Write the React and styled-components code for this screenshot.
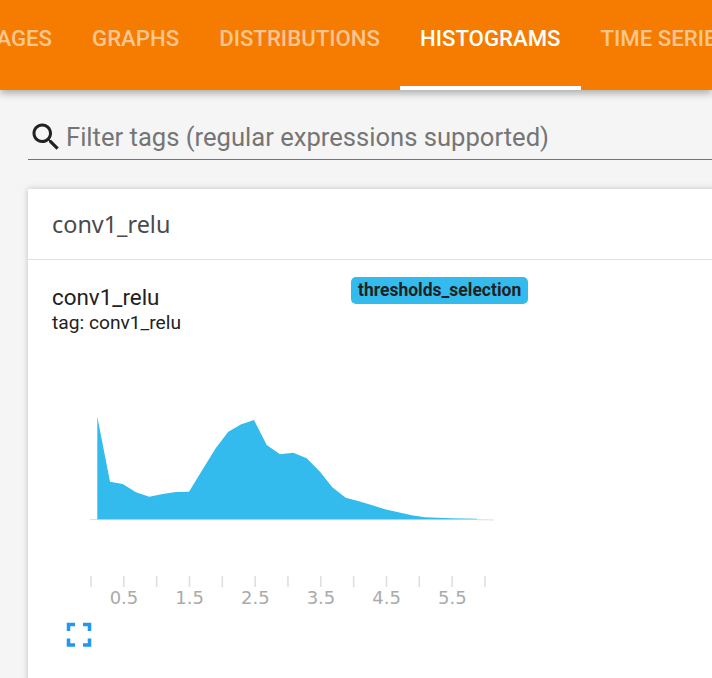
import styled, { createGlobalStyle } from 'styled-components'

const GlobalStyle = createGlobalStyle`
  html, body {
    margin: 0;
    width: 712px;
    height: 678px;
    overflow: hidden;
    background: #f5f5f5;
    font-family: Roboto, "Liberation Sans", sans-serif;
  }
`

const Page = styled.div`
  width: 712px;
  height: 678px;
  overflow: hidden;
  background: #f5f5f5;
`

const Header = styled.header`
  position: relative;
  z-index: 1;
  height: 90px;
  background: #f57c00;
  box-shadow: 0 3px 8px rgba(0, 0, 0, 0.32);
`

const Tabs = styled.nav`
  display: flex;
  margin-left: -49.5px;
  white-space: nowrap;
`

const Tab = styled.div`
  box-sizing: border-box;
  height: 90px;
  padding: 25px 20px 0;
  font-size: 22.2px;
  line-height: 26px;
  font-weight: 500;
  color: ${({ $active }) => ($active ? '#fff' : 'rgba(255, 255, 255, 0.58)')};
  border-bottom: 4px solid ${({ $active }) => ($active ? '#fff' : 'transparent')};
`

const Content = styled.main`
  padding: 30px 0 0 28px;
`

const Search = styled.div`
  display: flex;
  align-items: center;
  gap: 2px;
  height: 34px;
  padding-bottom: 5px;
  border-bottom: 1px solid #757575;
  margin-bottom: 29px;
`

const SearchIcon = styled.svg`
  width: 36px;
  height: 36px;
  flex-shrink: 0;
  fill: #212121;
`

const Placeholder = styled.span`
  font-size: 25.6px;
  line-height: 30px;
  color: #757575;
`

const Card = styled.section`
  width: 760px;
  height: 520px;
  background: #fff;
  box-shadow: 0 0 6px rgba(0, 0, 0, 0.22);
`

const CardTitle = styled.h2`
  box-sizing: border-box;
  height: 71px;
  margin: 0;
  padding: 20px 24px 0;
  border-bottom: 1px solid #e0e0e0;
  font-family: "Noto Sans", Roboto, sans-serif;
  font-size: 23.4px;
  line-height: 30px;
  font-weight: 400;
  color: #4a4a4a;
`

const CardBody = styled.div`
  padding: 17px 24px 0;
`

const ChartHead = styled.div`
  display: flex;
  align-items: flex-start;
  margin-bottom: 3px;
`

const ChartNames = styled.div`
  width: 299px;
  color: #212121;
  padding-top: 7px;
`

const ChartName = styled.div`
  font-size: 22.4px;
  line-height: 26px;
  margin-bottom: 1px;
`

const ChartTag = styled.div`
  font-size: 19.2px;
  line-height: 24px;
`

const Badge = styled.div`
  box-sizing: border-box;
  width: 177px;
  height: 27px;
  padding: 0 7px;
  border-radius: 5px;
  background: #33bbee;
  color: #212121;
  font-size: 17.5px;
  line-height: 26px;
  font-weight: 700;
  white-space: nowrap;
`

const Chart = styled.svg`
  display: block;
  margin: 0 0 0 -24px;
  width: 500px;
  height: 340px;
`

const AREA = [
  [97.3, 416.7], [110, 481.7], [122.7, 484], [136, 492.3], [149.3, 496.7], [162.7, 494],
  [176, 492], [189, 491.7], [202.3, 470], [215.7, 448.3], [228.3, 431.7], [241.3, 424.3],
  [254, 420], [266.7, 445], [280, 454.3], [293.3, 452.7], [306.7, 458.3], [320, 471.7],
  [332.3, 487.3], [345.7, 497.7], [359, 501.3], [372.3, 505.3], [385, 509.3], [398.3, 512.3],
  [411.7, 515.3], [425, 517.3], [438, 517.7], [451.7, 518.3], [476.7, 518.7], [476.7, 519.6],
  [97.3, 519.6],
]

const TICKS = Array.from({ length: 13 }, (_, i) => 91 + i * 32.83)
const LABELS = ['0.5', '1.5', '2.5', '3.5', '4.5', '5.5']

// chart coordinates are page coordinates, the svg starts at x 28 / y 338
const App = () => (
  <Page>
    <GlobalStyle />
    <Header>
      <Tabs>
        <Tab>IMAGES</Tab>
        <Tab>GRAPHS</Tab>
        <Tab>DISTRIBUTIONS</Tab>
        <Tab $active>HISTOGRAMS</Tab>
        <Tab>TIME SERIES</Tab>
      </Tabs>
    </Header>
    <Content>
      <Search>
        <SearchIcon viewBox="0 0 24 24">
          <path d="M15.5 14h-.79l-.28-.27C15.41 12.59 16 11.11 16 9.5 16 5.91 13.09 3 9.5 3S3 5.91 3 9.5 5.91 16 9.5 16c1.61 0 3.09-.59 4.23-1.57l.27.28v.79l5 4.99L20.49 19l-4.99-5zm-6 0C7.01 14 5 11.99 5 9.5S7.01 5 9.5 5 14 7.01 14 9.5 11.99 14 9.5 14z" />
        </SearchIcon>
        <Placeholder>Filter tags (regular expressions supported)</Placeholder>
      </Search>
      <Card>
        <CardTitle>conv1_relu</CardTitle>
        <CardBody>
          <ChartHead>
            <ChartNames>
              <ChartName>conv1_relu</ChartName>
              <ChartTag>tag: conv1_relu</ChartTag>
            </ChartNames>
            <Badge>thresholds_selection</Badge>
          </ChartHead>
          <Chart viewBox="28 338 500 340">
            <line x1="90" y1="519.6" x2="98" y2="519.6" stroke="#ddd" />
            <line x1="476" y1="519.6" x2="494" y2="520" stroke="#ddd" />
            <polygon points={AREA.map((p) => p.join(',')).join(' ')} fill="#33bbee" />
            {TICKS.map((x) => (
              <line key={x} x1={x} y1="576" x2={x} y2="587" stroke="#ddd" strokeWidth="1.5" />
            ))}
            {LABELS.map((label, i) => (
              <text
                key={label}
                x={124 + i * 65.66}
                y="604"
                textAnchor="middle"
                fontFamily="'DejaVu Sans', sans-serif"
                fontSize="18"
                fill="#aaa"
              >
                {label}
              </text>
            ))}
            <path
              d="M68.500 631v-6.500H75M83 624.500h6.500V631M89.500 638.500v6.500H83M75 645h-6.500v-6.500"
              fill="none"
              stroke="#2196f3"
              strokeWidth="3.500"
            />
          </Chart>
        </CardBody>
      </Card>
    </Content>
  </Page>
)

export default App
